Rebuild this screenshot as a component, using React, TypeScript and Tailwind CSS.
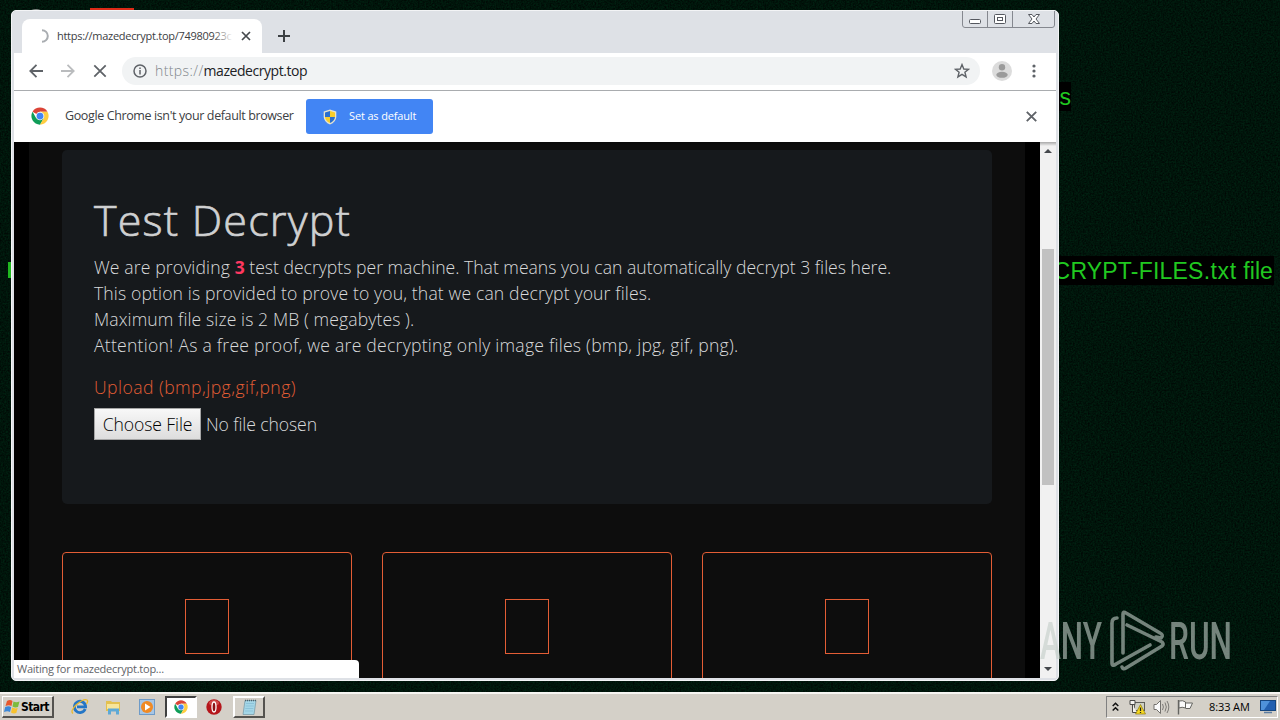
import type { ReactNode } from "react";

const DECRYPT_LINES = [
  {
    text: "This option is provided to prove to you, that we can decrypt your files.",
    className: "tracking-[0.13px]",
  },
  { text: "Maximum file size is 2 MB ( megabytes ).", className: "tracking-[0.1px]" },
  {
    text: "Attention! As a free proof, we are decrypting only image files (bmp, jpg, gif, png).",
    className: "tracking-[0.24px]",
  },
];

function ChromeLogo({ size = 16 }: { size?: number }) {
  return (
    <svg width={size} height={size} viewBox="0 0 48 48">
      <circle cx="24" cy="24" r="23" fill="#fff" />
      <path d="M24 24 L4.1 12.5 A23 23 0 0 1 43.9 12.5 L24 12.5 Z" fill="#db4437" />
      <path d="M4.1 12.5 A23 23 0 0 0 24 47 L34 30 L24 24 L14 30 Z" fill="#0f9d58" />
      <path d="M43.9 12.5 A23 23 0 0 1 24 47 L34 29.8 L24 12.5 Z" fill="#ffcd40" />
      <circle cx="24" cy="24" r="11.5" fill="#f1f1f1" />
      <circle cx="24" cy="24" r="9" fill="#4285f4" />
    </svg>
  );
}

function Wallpaper() {
  return (
    <svg className="absolute inset-0" width="1280" height="720">
      <filter id="grain" x="0" y="0" width="100%" height="100%" colorInterpolationFilters="sRGB">
        <feTurbulence type="fractalNoise" baseFrequency="0.6" numOctaves="2" seed="4" />
        <feColorMatrix values="0 0 0 0 0  0.16 0 0 0 0.002  0.08 0 0 0 0.002  0 0 0 0 1" />
      </filter>
      <rect width="1280" height="720" fill="#001509" />
      <rect width="1280" height="720" filter="url(#grain)" />
    </svg>
  );
}

function Watermark() {
  return (
    <svg
      className="absolute left-[1036px] top-[604px] opacity-60"
      width="240"
      height="76"
      viewBox="0 0 240 76"
    >
      <g
        fill="#c3cec8"
        fontFamily="Roboto, 'Liberation Sans', sans-serif"
        fontSize="51"
        fontWeight="500"
      >
        <text x="4" y="55" textLength="62" lengthAdjust="spacingAndGlyphs">ANY</text>
        <text x="133" y="55" textLength="63" lengthAdjust="spacingAndGlyphs">RUN</text>
      </g>
      <g fill="none" stroke="#c3cec8" strokeWidth="3.6" strokeLinecap="round" strokeLinejoin="round">
        <path d="M87 49 V10 Q87 7 90 9 L124 29 Q128 31 125 34 L120 33" />
        <path d="M81 14 Q76 14 76 19 V59 Q76 63 80 60 L114 41" />
        <path d="M91 21 L126 38 Q128 40 126 42 L90 64 Q87 66 86 63" />
      </g>
    </svg>
  );
}

function TitleBar() {
  return (
    <div className="relative flex h-[42px] items-end bg-[#dee1e6] pl-2">
      <div className="flex h-[34px] w-60 items-center rounded-t-lg bg-white pl-[14px]">
        <svg width="14" height="14" viewBox="0 0 14 14">
          <path d="M6 1.2 A5.8 5.8 0 0 1 6 12.8" fill="none" stroke="#a9adb1" strokeWidth="2" />
        </svg>
        <div className="relative ml-[7px] w-[176px] overflow-hidden whitespace-nowrap text-[11px] tracking-[-0.28px] text-[#3c4043]">
          https://mazedecrypt.top/74980923c
          <div className="absolute inset-y-0 right-0 w-5 bg-gradient-to-r from-transparent to-white" />
        </div>
        <svg className="ml-2" width="10" height="10" viewBox="0 0 10 10">
          <path d="M1 1 L9 9 M9 1 L1 9" stroke="#45494d" strokeWidth="1.7" />
        </svg>
      </div>
      <svg className="mb-[11px] ml-4" width="12" height="12" viewBox="0 0 12 12">
        <path d="M6 0 V12 M0 6 H12" stroke="#3c4043" strokeWidth="2" />
      </svg>
      <WindowButtons />
    </div>
  );
}

function WindowButtons() {
  return (
    <svg className="absolute right-0 top-0" width="94" height="18" viewBox="0 0 94 18">
      <path
        d="M0.5 0 V14 Q0.5 16.5 3 16.5 H90 Q92.5 16.5 92.5 14 V0 M25.5 0 V16.5 M50.5 0 V16.5"
        fill="none"
        stroke="#85888f"
      />
      <g fill="#fff" stroke="#55585f">
        <rect x="7.5" y="8.5" width="11" height="4" rx="1" />
        <rect x="32.5" y="3.5" width="11" height="9" rx="1" />
        <rect x="35.5" y="6.5" width="5" height="3" />
        <path d="M66.5 3.5 H70 L72 6 L74 3.5 H77.5 L74 8 L77.5 12.5 H74 L72 10 L70 12.5 H66.5 L70 8 Z" />
      </g>
    </svg>
  );
}

function Toolbar() {
  return (
    <div className="flex h-[38px] items-center border-b border-[#a9acaf] bg-white pl-[15px]">
      <svg className="mb-px" width="80" height="16" viewBox="0 0 80 16" fill="none" strokeWidth="1.8">
        <path d="M14 8 H1.5 M7.5 1.8 L1.3 8 L7.5 14.2" stroke="#5f6368" />
        <path d="M32 8 H44.5 M38.5 1.8 L44.7 8 L38.5 14.2" stroke="#babcbe" />
        <path d="M65.3 2.3 L76.7 13.7 M76.7 2.3 L65.3 13.7" stroke="#5f6368" />
      </svg>
      <div className="mb-px ml-[13px] flex h-7 w-[858px] items-center rounded-full bg-[#f1f3f4] pl-[11px]">
        <svg width="14" height="14" viewBox="0 0 14 14">
          <circle cx="7" cy="7" r="6" fill="none" stroke="#5f6368" strokeWidth="1.5" />
          <path d="M7 6 V10.5 M7 3.4 V5" stroke="#5f6368" strokeWidth="1.5" />
        </svg>
        <span className="mb-px ml-2 text-[14px] tracking-[-0.45px] text-[#202124]">
          <span className="font-light tracking-[0.4px] text-[#80868b]">https://</span>
          mazedecrypt.top
        </span>
        <svg className="ml-auto mr-[10px]" width="16" height="16" viewBox="0 0 16 16">
          <path
            d="M8 1.6 L9.8 6 L14.5 6.3 L10.9 9.3 L12.1 13.9 L8 11.4 L3.9 13.9 L5.1 9.3 L1.5 6.3 L6.2 6 Z"
            fill="none"
            stroke="#5f6368"
            strokeWidth="1.4"
          />
        </svg>
      </div>
      <svg className="mb-px ml-3" width="20" height="20" viewBox="0 0 20 20">
        <circle cx="10" cy="10" r="10" fill="#dcdcdc" />
        <circle cx="10" cy="6.2" r="3.2" fill="#9b9b9b" />
        <ellipse cx="10" cy="13.8" rx="5.7" ry="3" fill="#9b9b9b" />
      </svg>
      <svg className="mb-px ml-5" width="4" height="14" viewBox="0 0 4 14" fill="#5f6368">
        <circle cx="2" cy="2" r="1.6" />
        <circle cx="2" cy="7" r="1.6" />
        <circle cx="2" cy="12" r="1.6" />
      </svg>
    </div>
  );
}

function InfoBar() {
  return (
    <div className="flex h-[51px] items-center bg-white pl-[17px]">
      <div className="mb-px">
        <ChromeLogo size={18} />
      </div>
      <span className="ml-4 w-[241px] whitespace-nowrap text-[12.5px] tracking-[-0.38px] text-[#3c4043]">
        Google Chrome isn't your default browser
      </span>
      <button className="flex h-[35px] w-[127px] items-center rounded-[3px] bg-[#4285f4] pl-[17px] text-[11px] text-white">
        <svg width="14" height="16" viewBox="0 0 14 16">
          <path d="M7 0.5 L13.3 2.5 V8 Q13 13 7 15.6 Q1 13 0.7 8 V2.5 Z" fill="#e6e3cf" />
          <path d="M7 2 V8 H2 V3.5 Z M7 8 H12 Q11.5 12 7 14 Z" fill="#2a6fd0" />
          <path d="M7 2 V8 H12 V3.5 Z M7 8 H2 Q2.5 12 7 14 Z" fill="#f8cd2c" />
        </svg>
        <span className="ml-3 whitespace-nowrap tracking-[-0.15px]">Set as default</span>
      </button>
      <svg className="mb-px ml-auto mr-[19px]" width="11" height="11" viewBox="0 0 11 11">
        <path d="M0.8 0.8 L10.2 10.2 M10.2 0.8 L0.8 10.2" stroke="#5f6368" strokeWidth="1.9" />
      </svg>
    </div>
  );
}

function ScrollBar() {
  return (
    <div className="flex w-4 flex-col items-center bg-[#f1f1f1] py-[7px]">
      <svg width="8" height="4" viewBox="0 0 8 4">
        <path d="M0 4 L4 0 L8 4 Z" fill="#45484c" />
      </svg>
      <div className="mt-24 h-[236px] w-3 bg-[#c1c1c1]" />
      <svg className="mt-auto" width="8" height="4" viewBox="0 0 8 4">
        <path d="M0 0 L4 4 L8 0 Z" fill="#45484c" />
      </svg>
    </div>
  );
}

function PageContent() {
  return (
    <div className="flex-1 overflow-hidden bg-black px-[15px]">
      <div className="h-full bg-[#0d0d0d] px-[33px] pt-2">
        <section className="h-[354px] rounded-[5px] bg-[#16191c] px-8 pt-[43px] text-[#d9dadb]">
          <h2 className="h-[61px] whitespace-nowrap text-[43px] font-light leading-[53px] tracking-[1.2px] text-[#cfd0d1] [-webkit-text-stroke:0.7px_#cfd0d1]">
            Test Decrypt
          </h2>
          <div className="whitespace-nowrap text-[17.6px] font-light leading-[26px]">
            <p>
              <span className="tracking-[0.12px]">We are providing </span>
              <b className="font-bold text-[#ff3860]">3</b> test decrypts per machine. That means you can
              automatically decrypt 3 files here.
            </p>
            {DECRYPT_LINES.map((line) => (
              <p key={line.text} className={line.className}>
                {line.text}
              </p>
            ))}
            <label className="mt-4 block tracking-[0.45px] text-[#e25d35]">Upload (bmp,jpg,gif,png)</label>
            <div className="mt-2 flex items-center tracking-[-0.1px]">
              <button className="h-8 w-[107px] border border-[#a5a5a5] bg-gradient-to-b from-[#f8f8f8] to-[#dddddd] text-black">
                Choose File
              </button>
              <span className="ml-[5px]">No file chosen</span>
            </div>
          </div>
        </section>
        <div className="mt-12 grid grid-cols-3 gap-[30px]">
          {[0, 1, 2].map((i) => (
            <div key={i} className="flex h-[220px] justify-center rounded-[4px] border border-[#e25d35] pt-[46px]">
              <div className="h-[55px] w-11 border border-[#e25d35]" />
            </div>
          ))}
        </div>
      </div>
    </div>
  );
}

function BrowserWindow() {
  return (
    <div className="absolute left-[11px] top-[10px] h-[671px] w-[1048px] overflow-hidden rounded-[5px] border border-[#f3f4f6] bg-[#dee1e6] px-[2px]">
      <TitleBar />
      <Toolbar />
      <InfoBar />
      <div className="relative flex h-[536px]">
        <PageContent />
        <ScrollBar />
        <div className="absolute inset-x-0 top-0 h-1 bg-gradient-to-b from-black/30 to-transparent" />
        <div className="absolute bottom-0 left-0 flex h-[18px] w-[345px] items-center rounded-tr bg-white pl-[3px] text-[11px] tracking-[-0.25px] text-[#5f6368]">
          Waiting for mazedecrypt.top...
        </div>
      </div>
    </div>
  );
}

function TaskButton({ pressed = false, children }: { pressed?: boolean; children: ReactNode }) {
  return (
    <div
      className={`flex h-[22px] w-8 items-center justify-center border-2 ${
        pressed
          ? "border-b-white border-l-[#404040] border-r-white border-t-[#404040] bg-white"
          : "border-b-[#55534f] border-l-white border-r-[#55534f] border-t-white"
      }`}
    >
      {children}
    </div>
  );
}

function Taskbar() {
  return (
    <div className="absolute inset-x-0 bottom-0 flex h-[28px] items-center border-t-2 border-[#f6f5f2] bg-[#d4d0c8] pl-[2px]">
      <div className="flex h-[22px] w-[52px] items-center border-b-2 border-l border-r-2 border-t border-b-[#55534f] border-l-white border-r-[#55534f] border-t-white pl-px">
        <svg width="17" height="16" viewBox="0 0 17 16">
          <path d="M3 2 Q6 0 8.5 2 L7.5 7 Q5 5.5 1.5 7 Z" fill="#e8582c" />
          <path d="M9.5 2.5 Q12 4 15.5 2.5 L14 8 Q11 9 8.5 7.5 Z" fill="#7dbb3c" />
          <path d="M1.2 8 Q5 6.5 7.2 8.2 L6 13 Q3.5 11.5 0 13 Z" fill="#3d88d8" />
          <path d="M8.2 8.6 Q11 10 13.7 9 L12.3 14 Q9.5 15 7 13.5 Z" fill="#f8c22e" />
        </svg>
        <span className="text-[12px] font-bold tracking-[-0.6px] text-black [font-family:'DejaVu_Sans_Condensed','DejaVu_Sans',sans-serif]">
          Start
        </span>
      </div>
      <svg className="ml-[17px]" width="18" height="18" viewBox="0 0 18 18">
        <path d="M14.2 11 A5.6 5.6 0 1 1 14.6 8.8 H6" fill="none" stroke="#2476c6" strokeWidth="2.8" />
        <path d="M2 15.5 Q-1 13 5 7 Q13 0 16 2 Q17.5 3 15.5 6" fill="none" stroke="#eab92d" strokeWidth="1.3" />
      </svg>
      <svg className="ml-4" width="17" height="17" viewBox="0 0 17 17">
        <path d="M1 2 H6 L7 3 H15 V12 H1 Z" fill="#e3c04f" />
        <path d="M2 5 H14 V10 H2 Z" fill="#f7e59a" />
        <path d="M3 15.5 V9.5 H14 V15.5 H11 V12.5 H6 V15.5 Z" fill="#5ea9d6" />
      </svg>
      <svg className="ml-[17px]" width="16" height="16" viewBox="0 0 16 16">
        <rect x="0.5" y="0.5" width="15" height="15" fill="#a7c6e5" stroke="#6e9bc8" />
        <circle cx="8" cy="8" r="6" fill="#f08a24" />
        <path d="M6 4.5 V11.5 L11.5 8 Z" fill="#fff" />
      </svg>
      <div className="ml-[10px]">
        <TaskButton pressed>
          <ChromeLogo size={14} />
        </TaskButton>
      </div>
      <svg className="ml-[9px]" width="16" height="16" viewBox="0 0 16 16">
        <circle cx="8" cy="8" r="7.7" fill="#b5161b" />
        <ellipse cx="8" cy="4" rx="5" ry="3" fill="#d04a4a" />
        <ellipse cx="8" cy="8" rx="2" ry="5" fill="#8c1216" stroke="#fff" strokeWidth="1.3" />
      </svg>
      <div className="ml-[11px]">
        <TaskButton>
          <svg width="17" height="17" viewBox="0 0 17 17">
            <path d="M4 1.5 H15 L13 15.5 H2 Z" fill="#a4d6e7" stroke="#7395a3" strokeWidth="0.7" />
            <path d="M5 4.5 H13 M4.7 7 H12.7 M4.3 9.5 H12.3 M4 12 H12" stroke="#8cc3d9" />
            <path d="M4 1.5 H15" stroke="#49626c" strokeWidth="1.6" strokeDasharray="1 1" />
          </svg>
        </TaskButton>
      </div>
      <div className="ml-auto mr-[2px] flex h-[22px] w-[172px] items-center border border-b-white border-l-[#808080] border-r-white border-t-[#808080] pl-[5px]">
        <svg width="7" height="10" viewBox="0 0 7 10" fill="none" stroke="#111" strokeWidth="1.5">
          <path d="M0.7 4 L3.5 1.2 L6.3 4 M0.7 8.5 L3.5 5.7 L6.3 8.5" />
        </svg>
        <svg className="ml-[10px]" width="17" height="16" viewBox="0 0 17 16">
          <rect x="5.5" y="3.5" width="10" height="8" fill="#cfd0c4" stroke="#5d5d58" />
          <path d="M1 1.5 H6 V5.5 H1 Z M3.5 5.5 V13.5 H8" fill="#f4f4f0" stroke="#4b4b48" />
          <path d="M11.5 5.5 L16.5 15 H6.5 Z" fill="#f6d820" stroke="#8d7a12" strokeWidth="0.7" />
          <path d="M11.5 8.5 V12 M11.5 13 V14" stroke="#222" strokeWidth="1.3" />
        </svg>
        <svg className="ml-[7px]" width="17" height="16" viewBox="0 0 17 16" stroke="#73716d">
          <path d="M1 5.5 H3.5 L7.5 1.5 V14.5 L3.5 10.5 H1 Z" fill="#fafafa" />
          <path d="M9.5 5 Q11.3 8 9.5 11 M12 3.5 Q14.7 8 12 12.5 M14 2 Q17.6 8 14 14" fill="none" strokeWidth="0.9" />
        </svg>
        <svg className="ml-[7px]" width="17" height="16" viewBox="0 0 17 16">
          <path d="M1.5 1 V15.5" stroke="#646460" strokeWidth="1.4" />
          <path d="M2 2 Q6 1 8.5 3 V9 Q5 7.5 2 9 Z M8.5 4 H15.5 L13 9.5 H8.5" fill="#fafafa" stroke="#646460" />
        </svg>
        <span className="ml-[15px] whitespace-nowrap text-[11px] tracking-[-0.1px] text-black">8:33 AM</span>
        <svg className="ml-auto mr-px" width="16" height="14" viewBox="0 0 16 14">
          <rect x="0.5" y="0.5" width="15" height="10" fill="#2360b0" stroke="#16467f" />
          <path d="M1 1 H10 L4 10 H1 Z" fill="#4f92da" />
          <path d="M4 12.5 H12" stroke="#5c7ca0" strokeWidth="1.5" />
        </svg>
      </div>
    </div>
  );
}

export default function App() {
  return (
    <div className="relative h-[720px] w-[1280px] overflow-hidden bg-[#001509] [font-family:'Open_Sans','Noto_Sans',sans-serif]">
      <Wallpaper />
      <div className="absolute left-[90px] top-2 h-2 w-11 bg-[#dc2a17]" />
      <div className="absolute left-[24px] top-[9px] h-3 w-6 rounded-t-full bg-[#7d8580]" />
      <div className="absolute left-[8px] top-[262px] h-[16px] w-[3px] bg-[#20b820]" />
      <div className="absolute left-[1050px] top-[82px] h-[29px] w-[21px] bg-black text-right text-[23px] leading-[31px] text-[#20c820] [font-family:'Liberation_Sans',sans-serif]">
        s
      </div>
      <div className="absolute right-[6px] top-[256px] h-[29px] whitespace-nowrap bg-black pr-px text-[23px] leading-[30px] tracking-[0.2px] text-[#20c820] [font-family:'Liberation_Sans',sans-serif]">
        CRYPT-FILES<span className="tracking-[0.6px]">.txt</span>
        <span className="tracking-[0.1px]"> file</span>
      </div>
      <BrowserWindow />
      <Watermark />
      <Taskbar />
    </div>
  );
}
